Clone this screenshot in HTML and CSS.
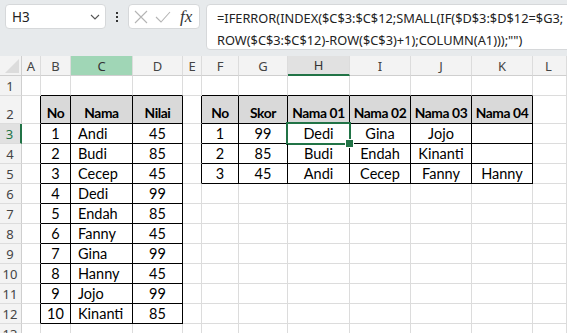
FILE: index.html
```html
<!DOCTYPE html>
<html>
<head>
<meta charset="utf-8">
<link rel="stylesheet" href="styles.css">
</head>
<body>
<div class="app">
  <div class="toolbar">
    <div class="namebox">
      <span class="ref">H3</span>
      <svg class="chev" width="10" height="6" viewBox="0 0 10 6"><path d="M1 1 L5 5 L9 1" fill="none" stroke="#555" stroke-width="1.1"/></svg>
    </div>
    <div class="dots"><i></i><i></i><i></i></div>
    <div class="fxbox">
      <svg class="ico" width="14" height="14" viewBox="0 0 14 14"><path d="M1 1 L13 13 M13 1 L1 13" stroke="#b4b4b4" stroke-width="1.1" fill="none"/></svg>
      <svg class="ico" width="16" height="14" viewBox="0 0 16 14"><path d="M1 7 L6 12 L15 2" stroke="#b4b4b4" stroke-width="1.1" fill="none"/></svg>
      <span class="fx">fx</span>
    </div>
    <div class="formula">
      <div>=IFERROR(INDEX($C$3:$C$12;SMALL(IF($D$3:$D$12=$G3;</div>
      <div>ROW($C$3:$C$12)-ROW($C$3)+1);COLUMN(A1)));"")</div>
    </div>
  </div>

  <div class="sheet">
    <div class="corner"><span class="tri"></span></div>
    <div class="ch">A</div><div class="ch">B</div><div class="ch chl">C</div><div class="ch">D</div><div class="ch">E</div><div class="ch">F</div><div class="ch">G</div><div class="ch chs">H</div><div class="ch">I</div><div class="ch">J</div><div class="ch">K</div><div class="ch chl2">L</div>

    <div class="rh">1</div>
    <div class="c"></div><div class="c kb"></div><div class="c kb"></div><div class="c kb"></div><div class="c"></div><div class="c kb"></div><div class="c kb"></div><div class="c kb"></div><div class="c kb"></div><div class="c kb"></div><div class="c kb"></div><div class="c"></div>

    <div class="rh">2</div>
    <div class="c kr"></div><div class="c k h">No</div><div class="c k h">Nama</div><div class="c k h">Nilai</div><div class="c kr"></div><div class="c k h">No</div><div class="c k h">Skor</div><div class="c k h">Nama 01</div><div class="c k h">Nama 02</div><div class="c k h">Nama 03</div><div class="c k h">Nama 04</div><div class="c"></div>

    <div class="rh rhs">3</div>
    <div class="c kr"></div><div class="c k">1</div><div class="c k l">Andi</div><div class="c k">45</div><div class="c kr"></div><div class="c k">1</div><div class="c k">99</div><div class="c k sel">Dedi</div><div class="c k">Gina</div><div class="c k">Jojo</div><div class="c k"></div><div class="c"></div>

    <div class="rh">4</div>
    <div class="c kr"></div><div class="c k">2</div><div class="c k l">Budi</div><div class="c k">85</div><div class="c kr"></div><div class="c k">2</div><div class="c k">85</div><div class="c k">Budi</div><div class="c k">Endah</div><div class="c k">Kinanti</div><div class="c k"></div><div class="c"></div>

    <div class="rh">5</div>
    <div class="c kr"></div><div class="c k">3</div><div class="c k l">Cecep</div><div class="c k">45</div><div class="c kr"></div><div class="c k">3</div><div class="c k">45</div><div class="c k">Andi</div><div class="c k">Cecep</div><div class="c k">Fanny</div><div class="c k">Hanny</div><div class="c"></div>

    <div class="rh">6</div>
    <div class="c kr"></div><div class="c k">4</div><div class="c k l">Dedi</div><div class="c k">99</div><div class="c"></div><div class="c"></div><div class="c"></div><div class="c"></div><div class="c"></div><div class="c"></div><div class="c"></div><div class="c"></div>

    <div class="rh">7</div>
    <div class="c kr"></div><div class="c k">5</div><div class="c k l">Endah</div><div class="c k">85</div><div class="c"></div><div class="c"></div><div class="c"></div><div class="c"></div><div class="c"></div><div class="c"></div><div class="c"></div><div class="c"></div>

    <div class="rh">8</div>
    <div class="c kr"></div><div class="c k">6</div><div class="c k l">Fanny</div><div class="c k">45</div><div class="c"></div><div class="c"></div><div class="c"></div><div class="c"></div><div class="c"></div><div class="c"></div><div class="c"></div><div class="c"></div>

    <div class="rh">9</div>
    <div class="c kr"></div><div class="c k">7</div><div class="c k l">Gina</div><div class="c k">99</div><div class="c"></div><div class="c"></div><div class="c"></div><div class="c"></div><div class="c"></div><div class="c"></div><div class="c"></div><div class="c"></div>

    <div class="rh">10</div>
    <div class="c kr"></div><div class="c k">8</div><div class="c k l">Hanny</div><div class="c k">45</div><div class="c"></div><div class="c"></div><div class="c"></div><div class="c"></div><div class="c"></div><div class="c"></div><div class="c"></div><div class="c"></div>

    <div class="rh">11</div>
    <div class="c kr"></div><div class="c k">9</div><div class="c k l">Jojo</div><div class="c k">99</div><div class="c"></div><div class="c"></div><div class="c"></div><div class="c"></div><div class="c"></div><div class="c"></div><div class="c"></div><div class="c"></div>

    <div class="rh">12</div>
    <div class="c kr"></div><div class="c k">10</div><div class="c k l">Kinanti</div><div class="c k">85</div><div class="c"></div><div class="c"></div><div class="c"></div><div class="c"></div><div class="c"></div><div class="c"></div><div class="c"></div><div class="c"></div>

    <div class="rh">13</div>
    <div class="c"></div><div class="c"></div><div class="c"></div><div class="c"></div><div class="c"></div><div class="c"></div><div class="c"></div><div class="c"></div><div class="c"></div><div class="c"></div><div class="c"></div><div class="c"></div>
  </div>
</div>
</body>
</html>
```

FILE: styles.css
```css
* { box-sizing: border-box; }
html, body { margin: 0; padding: 0; }
body { width: 567px; height: 333px; overflow: hidden; background: #fff; }

.app { width: 567px; height: 333px; overflow: hidden; }

.toolbar {
  height: 56px;
  background: #e7eaec;
  display: flex;
  align-items: flex-start;
  padding: 4px 0 0 5px;
  overflow: hidden;
  font-family: "Noto Sans", sans-serif;
}

.namebox {
  width: 101px;
  height: 25px;
  flex: none;
  background: #fff;
  border: 1px solid #d6d8da;
  border-radius: 4px;
  display: flex;
  align-items: center;
  justify-content: space-between;
  padding: 0 5px 0 6px;
}
.ref { font-size: 13.5px; color: #222; }
.chev { margin-top: 1px; }

.dots {
  width: 22px;
  height: 25px;
  flex: none;
  display: flex;
  flex-direction: column;
  align-items: center;
  justify-content: center;
  gap: 2px;
}
.dots i { display: block; width: 2px; height: 2px; background: #333; }

.fxbox {
  width: 72px;
  height: 25px;
  flex: none;
  background: #fff;
  border: 1px solid #d6d8da;
  border-radius: 4px;
  display: flex;
  align-items: center;
  padding: 0 0 0 5px;
  gap: 7px;
}
.fx {
  font-family: "Liberation Serif", serif;
  font-style: italic;
  font-size: 17px;
  color: #333;
  margin-left: 2px;
}

.formula {
  margin-left: 6px;
  width: 420px;
  height: 46px;
  flex: none;
  background: #fff;
  border: 1px solid #d6d8da;
  border-radius: 4px;
  padding: 2px 0 0 10px;
  font-size: 12.8px;
  line-height: 22px;
  color: #222;
  white-space: nowrap;
}

.sheet {
  display: grid;
  grid-template-columns: 22px 19px 30px 62px 50px 19px 37px 49px 62px 61px 61px 61px 34px;
  grid-template-rows: 20px 20px 28px repeat(10, 20px) 20px;
  font-family: Lato, sans-serif;
  font-size: 14.5px;
  color: #000;
}

.corner {
  background: #f3f3f3;
  border-right: 1px solid #cfcfcf;
  border-bottom: 1px solid #cfcfcf;
  display: flex;
  align-items: flex-end;
  justify-content: flex-end;
  padding: 0 2px 2px 0;
}
.tri {
  width: 0; height: 0;
  border-left: 14px solid transparent;
  border-bottom: 14px solid #dcdcdc;
}

.ch {
  background: #f3f3f3;
  border-right: 1px solid #dcdcdc;
  border-bottom: 1px solid #cfcfcf;
  font-family: "Noto Sans", sans-serif;
  font-size: 13px;
  color: #444;
  display: flex;
  align-items: center;
  justify-content: center;
}
.chl { background: #a0d6b6; color: #333; }
.chs { background: #e1e1e1; border-bottom: 2px solid #217346; color: #333; }
.chl2 { justify-content: flex-start; padding-left: 12px; }

.rh {
  background: #f3f3f3;
  border-right: 1px solid #cfcfcf;
  border-bottom: 1px solid #dcdcdc;
  font-family: "Noto Sans", sans-serif;
  font-size: 13px;
  color: #444;
  display: flex;
  align-items: flex-end;
  justify-content: center;
  padding: 0 1px 0 0;
  line-height: 18px;
}
.rhs { background: #e1e1e1; border-right: 2px solid #217346; color: #217346; }

.c {
  border-right: 1px solid #dcdcdc;
  border-bottom: 1px solid #dcdcdc;
  display: flex;
  align-items: flex-end;
  justify-content: center;
  line-height: 18px;
  padding-bottom: 0;
  white-space: nowrap;
  position: relative;
}
.l { justify-content: flex-start; padding-left: 7px; }
.k { border-right-color: #000; border-bottom-color: #000; }
.kr { border-right-color: #000; }
.kb { border-bottom-color: #000; }
.h { background: #d9d9d9; font-weight: bold; font-size: 13.8px; letter-spacing: -0.4px; padding-bottom: 1px; }

.sel::after {
  content: "";
  position: absolute;
  left: -2px; top: -2px; right: -2px; bottom: -2px;
  border: 2px solid #217346;
}
.sel::before {
  content: "";
  position: absolute;
  right: -5px; bottom: -5px;
  width: 7px; height: 7px;
  background: #217346;
  border: 1px solid #fff;
  z-index: 2;
}
```
